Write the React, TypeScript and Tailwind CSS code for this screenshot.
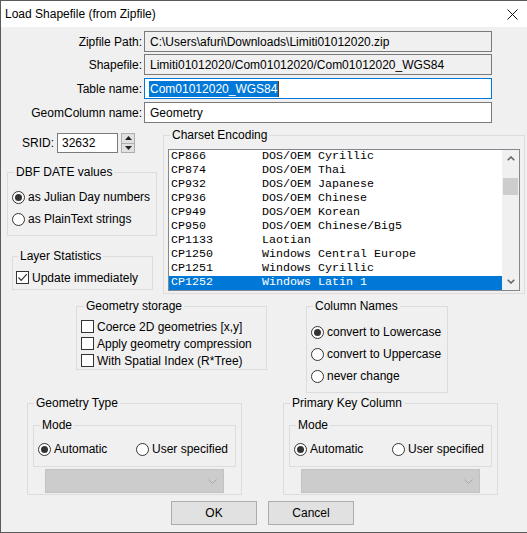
import React from 'react';

const charsets = [
  ['CP866', 'DOS/OEM Cyrillic'],
  ['CP874', 'DOS/OEM Thai'],
  ['CP932', 'DOS/OEM Japanese'],
  ['CP936', 'DOS/OEM Chinese'],
  ['CP949', 'DOS/OEM Korean'],
  ['CP950', 'DOS/OEM Chinese/Big5'],
  ['CP1133', 'Laotian'],
  ['CP1250', 'Windows Central Europe'],
  ['CP1251', 'Windows Cyrillic'],
  ['CP1252', 'Windows Latin 1'],
];

const Radio = ({ checked, label }: { checked?: boolean; label: string }) => (
  <div className="flex items-center gap-[3px] h-[22px] whitespace-nowrap">
    <div className="w-[13px] h-[13px] rounded-full border border-[#333] bg-white flex items-center justify-center shrink-0">
      {checked && <div className="w-[7px] h-[7px] rounded-full bg-[#333]" />}
    </div>
    <span>{label}</span>
  </div>
);

const Check = ({ checked, label }: { checked?: boolean; label: string }) => (
  <div className="flex items-center gap-[3px] h-[17px] whitespace-nowrap">
    <div className="w-[13px] h-[13px] border border-[#333] bg-white shrink-0 flex items-center justify-center">
      {checked && (
        <svg width="11" height="11" viewBox="0 0 11 11">
          <path d="M1.5 5.5 L4.2 8.3 L9.8 2.2" fill="none" stroke="#333" strokeWidth="1.2" />
        </svg>
      )}
    </div>
    <span>{label}</span>
  </div>
);

const Legend = ({ children, ml = 'ml-[6px]' }: { children: React.ReactNode; ml?: string }) => (
  <legend className={`${ml} px-[2px] leading-[14px]`}>{children}</legend>
);

const Field = ({ label, value, mt, readOnly, focus }: { label: string; value: string; mt: string; readOnly?: boolean; focus?: boolean }) => (
  <div className={`flex items-center ${mt}`}>
    <span className="w-[141px] text-right">{label}</span>
    <div
      className={`ml-[2px] w-[348px] h-[21px] border flex items-center pl-[4px] ${
        readOnly ? 'bg-[#f0f0f0] border-[#7a7a7a]' : focus ? 'bg-white border-[#0078d7]' : 'bg-white border-[#7a7a7a]'
      }`}
    >
      {focus ? (
        <>
          <span className="bg-[#0078d7] text-white leading-[16px] pl-[1px] pr-[1px]">{value}</span>
          <span className="w-px h-[16px] bg-[#6b3a00]" />
        </>
      ) : (
        <span className="pl-[1px]">{value}</span>
      )}
    </div>
  </div>
);

const Combo = () => (
  <div className="ml-[17px] mt-[2px] w-[179px] h-[24px] bg-[#cccccc] border border-[#c2c2c2] flex items-center justify-end pr-[6px]">
    <svg width="9" height="5" viewBox="0 0 9 5">
      <path d="M0.5 0.5 L4.5 4.5 L8.5 0.5" fill="none" stroke="#a8a8a8" strokeWidth="1" />
    </svg>
  </div>
);

const ModeGroup = ({ pl }: { pl: string }) => (
  <fieldset className="ml-[5px] mt-[8px] w-[203px] border border-[#dcdcdc] pb-[6px]">
    <Legend>Mode</Legend>
    <div className={`flex mt-[6px] ${pl}`}>
      <div className="w-[98px]">
        <Radio checked label="Automatic" />
      </div>
      <Radio label="User specified" />
    </div>
  </fieldset>
);

export default function App() {
  return (
    <div className="w-[527px] h-[533px] bg-[#f0f0f0] border-t border-l border-b border-[#5a5a5a] flex flex-col text-[12px] text-black font-['Liberation_Sans',Arial,sans-serif] overflow-hidden">
      {/* title bar */}
      <div className="h-[26px] bg-white flex items-center justify-between pl-[4px] pr-[9px] shrink-0">
        <span>Load Shapefile (from Zipfile)</span>
        <svg width="11" height="11" viewBox="0 0 11 11">
          <path d="M0.5 0.5 L10.5 10.5 M10.5 0.5 L0.5 10.5" stroke="#111" strokeWidth="1" />
        </svg>
      </div>

      <Field mt="mt-[4px]" label="Zipfile Path:" value="C:\Users\afuri\Downloads\Limiti01012020.zip" readOnly />
      <Field mt="mt-[2px]" label="Shapefile:" value="Limiti01012020/Com01012020/Com01012020_WGS84" readOnly />
      <Field mt="mt-[3px]" label="Table name:" value="Com01012020_WGS84" focus />
      <Field mt="mt-[3px]" label="GeomColumn name:" value="Geometry" />

      <div className="flex mt-[5px]">
        {/* left column */}
        <div className="w-[162px] flex flex-col">
          <div className="flex items-center mt-[5px]">
            <span className="w-[53px] text-right">SRID:</span>
            <div className="ml-[3px] w-[61px] h-[20px] bg-white border border-[#7a7a7a] flex items-center pl-[4px]">32632</div>
            <div className="ml-[3px] w-[14px] h-[20px] border border-[#adadad] bg-[#e1e1e1] flex flex-col">
              <div className="flex-1 flex items-center justify-center border-b border-[#adadad]">
                <svg width="7" height="4" viewBox="0 0 7 4"><path d="M3.5 0 L7 4 L0 4 Z" fill="#222" /></svg>
              </div>
              <div className="flex-1 flex items-center justify-center">
                <svg width="7" height="4" viewBox="0 0 7 4"><path d="M0 0 L7 0 L3.5 4 Z" fill="#222" /></svg>
              </div>
            </div>
          </div>

          <fieldset className="ml-[6px] mt-[12px] w-[150px] border border-[#dcdcdc] pb-[5px]">
            <Legend>DBF DATE values</Legend>
            <div className="mt-[7px] pl-[4px]">
              <Radio checked label="as Julian Day numbers" />
              <Radio label="as PlainText strings" />
            </div>
          </fieldset>

          <fieldset className="ml-[11px] mt-[13px] w-[141px] border border-[#dcdcdc] pb-[3px]">
            <Legend ml="ml-[5px]">Layer Statistics</Legend>
            <div className="mt-[6px] pl-[3px]">
              <Check checked label="Update immediately" />
            </div>
          </fieldset>
        </div>

        {/* charset encoding */}
        <fieldset className="w-[362px] border border-[#dcdcdc] pb-[2px]">
          <Legend>Charset Encoding</Legend>
          <div className="ml-[4px] mt-[7px] w-[352px] h-[142px] border border-[#828790] bg-white flex">
            <div className="flex-1 flex flex-col font-['Liberation_Mono','Courier_New',monospace] text-[11.67px]">
              {charsets.map(([code, name], i) => (
                <div
                  key={code}
                  className={`h-[14px] flex items-center pl-[2px] whitespace-pre ${i === 9 ? 'bg-[#0078d7] text-white' : ''}`}
                >
                  <span className="w-[91px]">{code}</span>
                  <span>{name}</span>
                </div>
              ))}
            </div>
            <div className="w-[17px] bg-[#f0f0f0] flex flex-col items-center">
              <div className="h-[17px] flex items-center justify-center">
                <svg width="8" height="5" viewBox="0 0 8 5"><path d="M0.7 4.3 L4 1 L7.3 4.3" fill="none" stroke="#606060" strokeWidth="1.5" /></svg>
              </div>
              <div className="mt-[11px] w-[15px] h-[17px] bg-[#cdcdcd]" />
              <div className="flex-1" />
              <div className="h-[17px] flex items-center justify-center">
                <svg width="8" height="5" viewBox="0 0 8 5"><path d="M0.7 0.7 L4 4 L7.3 0.7" fill="none" stroke="#606060" strokeWidth="1.5" /></svg>
              </div>
            </div>
          </div>
        </fieldset>
      </div>

      <div className="flex items-start mt-[5px]">
        <fieldset className="ml-[75px] w-[191px] border border-[#dcdcdc]">
          <Legend ml="ml-[7px]">Geometry storage</Legend>
          <div className="mt-[5px] pl-[4px]">
            <Check label="Coerce 2D geometries [x,y]" />
            <Check label="Apply geometry compression" />
            <Check label="With Spatial Index (R*Tree)" />
          </div>
        </fieldset>

        <fieldset className="ml-[39px] w-[142px] border border-[#dcdcdc] pb-[5px]">
          <Legend>Column Names</Legend>
          <div className="mt-[8px] pl-[4px]">
            <Radio checked label="convert to Lowercase" />
            <Radio label="convert to Uppercase" />
            <Radio label="never change" />
          </div>
        </fieldset>
      </div>

      <div className="flex mt-[3px]">
        <fieldset className="ml-[26px] w-[215px] border border-[#dcdcdc] pb-[1px]">
          <Legend>Geometry Type</Legend>
          <ModeGroup pl="pl-[4px]" />
          <Combo />
        </fieldset>

        <fieldset className="ml-[41px] w-[215px] border border-[#dcdcdc] pb-[1px]">
          <Legend>Primary Key Column</Legend>
          <ModeGroup pl="pl-[4px]" />
          <Combo />
        </fieldset>
      </div>

      <div className="flex mt-[6px]">
        <button className="ml-[170px] w-[86px] h-[24px] bg-[#e1e1e1] border border-[#adadad]">OK</button>
        <button className="ml-[11px] w-[86px] h-[24px] bg-[#e1e1e1] border border-[#adadad]">Cancel</button>
      </div>
    </div>
  );
}
